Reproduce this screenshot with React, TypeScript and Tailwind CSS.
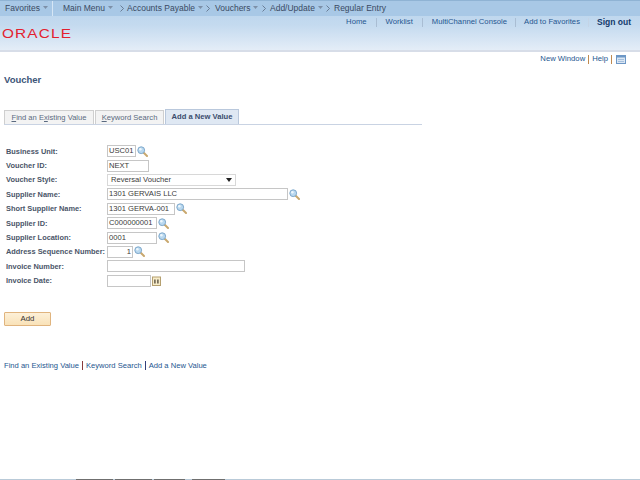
import React from "react";

const Caret = () => (
  <svg width="5" height="3" viewBox="0 0 5 3" className="inline-block ml-[3px] mb-[2px]">
    <path d="M0 0H5L2.5 3Z" fill="#7d90a8" />
  </svg>
);
const Chev = () => (
  <svg width="4" height="7" viewBox="0 0 4 7" className="inline-block">
    <path d="M.5 .5L3.5 3.5L.5 6.5" fill="none" stroke="#5a6a80" strokeWidth="0.8" />
  </svg>
);
const Lens = () => (
  <svg width="11" height="11" viewBox="0 0 11 11" className="ml-[1px] shrink-0">
    <path d="M6.5 6.5L10 10" stroke="#c9a86e" strokeWidth="2" strokeLinecap="round" />
    <circle cx="4.2" cy="4.2" r="3.4" fill="#b9d8ef" stroke="#7ea8cb" strokeWidth="1" />
    <circle cx="3.4" cy="3.2" r="1.2" fill="#eef7fc" />
  </svg>
);
const Cal = () => (
  <svg width="9" height="10" viewBox="0 0 9 10" className="ml-[1px] shrink-0">
    <rect x=".5" y="1" width="8" height="8.5" fill="#f7ecc9" stroke="#b5a070" />
    <rect x="2.2" y="3.5" width="1.4" height="4" fill="#5a5040" />
    <rect x="5.2" y="3.5" width="1.4" height="4" fill="#5a5040" />
  </svg>
);

const Field = ({ w, value, right }: { w: string; value?: string; right?: boolean }) => (
  <div className={`${w} ${right ? "text-right pr-[1px]" : "pl-[1px]"} bg-white h-[12px] border border-[#c6c6c6] text-[#3a3a3a] text-[7.6px] leading-[10px] shrink-0 whitespace-nowrap overflow-hidden`}>
    {value}
  </div>
);

const rows: { label: string; control: React.ReactNode }[] = [
  { label: "Business Unit:", control: <><Field w="w-[29px]" value="USC01" /><Lens /></> },
  { label: "Voucher ID:", control: <Field w="w-[42px]" value="NEXT" /> },
  {
    label: "Voucher Style:",
    control: (
      <div className="w-[129px] h-[12px] border border-[#d8d8d8] flex items-center justify-between pl-[3px] pr-[3px] text-[7.6px] text-[#3a3a3a]">
        <span>Reversal Voucher</span>
        <svg width="6" height="4" viewBox="0 0 6 4"><path d="M0 0H6L3 4Z" fill="#222" /></svg>
      </div>
    ),
  },
  { label: "Supplier Name:", control: <><Field w="w-[181px]" value="1301 GERVAIS LLC" /><Lens /></> },
  { label: "Short Supplier Name:", control: <><Field w="w-[68px]" value="1301 GERVA-001" /><Lens /></> },
  { label: "Supplier ID:", control: <><Field w="w-[50px]" value="C000000001" /><Lens /></> },
  { label: "Supplier Location:", control: <><Field w="w-[50px]" value="0001" /><Lens /></> },
  { label: "Address Sequence Number:", control: <><Field w="w-[26px]" value="1" right /><Lens /></> },
  { label: "Invoice Number:", control: <Field w="w-[138px]" /> },
  { label: "Invoice Date:", control: <><Field w="w-[44px]" /><Cal /></> },
];

const Sep = ({ color = "bg-[#c08a50]" }: { color?: string }) => <span className={`inline-block w-[1px] h-[9px] ${color}`} />;

export default function App() {
  return (
    <div className="w-[640px] h-[480px] overflow-hidden bg-white flex flex-col font-['Liberation_Sans',Arial,sans-serif]">
      {/* Header */}
      <div className="h-[52px] shrink-0 border-b-2 border-[#d7dde8] bg-gradient-to-b from-[#b6d2ec] via-[#c4daef] to-[#e4edf7] flex flex-col">
        <div className="h-[16px] bg-[#a8c8e6] border-t border-[#8fb3d4] flex items-center text-[8.5px] text-[#3a4a63] whitespace-nowrap">
          <div className="pl-[5px] w-[52px]">Favorites<Caret /></div>
          <div className="w-[1px] h-[15px] bg-[#d6e6f5]" />
          <div className="pl-[10px] w-[67px]">Main Menu<Caret /></div>
          <Chev />
          <div className="pl-[3px] w-[82px]">Accounts Payable<Caret /></div>
          <Chev />
          <div className="pl-[5px] w-[52px]">Vouchers<Caret /></div>
          <Chev />
          <div className="pl-[4px] w-[60px]">Add/Update<Caret /></div>
          <Chev />
          <div className="pl-[4px]">Regular Entry</div>
        </div>
        <div className="flex justify-between items-start">
          <span className="ml-[2px] mt-[10px] text-[13px] leading-[15px] text-[#e3202e] tracking-[1px] origin-left scale-x-[1.18] inline-block">ORACLE</span>
          <div className="flex items-center h-[13px] mt-[-1px] pt-[1px] pr-[9px] text-[7.7px] text-[#25568f] whitespace-nowrap">
            <span>Home</span>
            <span className="w-[1px] h-[9px] bg-[#a9bdd3] mx-[9px]" />
            <span>Worklist</span>
            <span className="w-[1px] h-[9px] bg-[#a9bdd3] mx-[9px]" />
            <span>MultiChannel Console</span>
            <span className="w-[1px] h-[9px] bg-[#a9bdd3] mx-[8px]" />
            <span>Add to Favorites</span>
            <span className="w-[1px] h-[9px] bg-[#c4d4e6] mx-[8px]" />
            <span className="font-bold text-[8.5px] text-[#13396b]">Sign out</span>
          </div>
        </div>
      </div>

      {/* Tool links */}
      <div className="h-[12px] mt-[1px] flex items-center justify-end gap-[3px] pr-[14px] text-[7.7px] text-[#25568f]">
        <span>New Window</span>
        <Sep />
        <span>Help</span>
        <Sep />
        <svg width="10" height="9" viewBox="0 0 10 9" className="ml-[1px]">
          <rect x=".5" y=".5" width="9" height="8" fill="#dbe6f3" stroke="#6d97c6" />
          <rect x="0" y="0" width="10" height="2.5" fill="#6d97c6" />
          <path d="M2 4.5H8M2 6.5H8" stroke="#a5c0dd" />
        </svg>
      </div>

      {/* Title */}
      <div className="mt-[9px] pl-[4px] text-[9.5px] leading-[12px] font-bold text-[#3d5578]">Voucher</div>

      {/* Tabs */}
      <div className="mt-[24px] ml-[4px] w-[418px] h-[15px] border-b border-[#c9d3e3] flex items-end gap-[1px] text-[7.6px] whitespace-nowrap">
        <div className="h-[14px] w-[90px] flex items-center justify-center border border-b-0 border-[#cfcfcf] bg-[#f3f3f3] text-[#5a6a80]">
          <span><u>F</u>ind an E<u>x</u>isting Value</span>
        </div>
        <div className="h-[14px] w-[69px] flex items-center justify-center border border-b-0 border-[#cfcfcf] bg-[#f3f3f3] text-[#5a6a80]">
          <span><u>K</u>eyword Search</span>
        </div>
        <div className="h-[15px] w-[74px] flex items-center justify-center border border-[#b9c8dc] border-b-0 bg-[#dfe8f3] font-bold text-[#3a4d6d]">
          Add a New Value
        </div>
      </div>

      {/* Form */}
      <div className="mt-[19px] pl-[6px] flex flex-col">
        {rows.map((r) => (
          <div key={r.label} className="h-[14.4px] flex items-center">
            <span className="w-[101px] shrink-0 text-[7.4px] font-bold text-[#4a5568] whitespace-nowrap">{r.label}</span>
            {r.control}
          </div>
        ))}
      </div>

      {/* Button */}
      <div className="mt-[24px] ml-[4px] w-[47px] h-[14px] rounded-[1px] border border-[#e0b47e] bg-gradient-to-b from-[#fdf0d8] to-[#f9e2b8] flex items-center justify-center text-[7.8px] text-[#333]">
        Add
      </div>

      {/* Bottom links */}
      <div className="mt-[34px] ml-[4px] flex items-center gap-[3px] text-[7.6px] text-[#25568f] whitespace-nowrap">
        <span>Find an Existing Value</span>
        <Sep color="bg-[#8a3a3a]" />
        <span>Keyword Search</span>
        <Sep color="bg-[#33407a]" />
        <span>Add a New Value</span>
      </div>

      {/* Bottom strip */}
      <div className="mt-auto h-[1px] bg-[#b9cad8] flex">
        <div className="w-[76px]" />
        <div className="w-[37px] bg-[#6f6f6f]" />
        <div className="w-[2px]" />
        <div className="w-[37px] bg-[#6f6f6f]" />
        <div className="w-[2px]" />
        <div className="w-[31px] bg-[#6f6f6f]" />
        <div className="w-[7px]" />
        <div className="w-[33px] bg-[#6f6f6f]" />
      </div>
    </div>
  );
}
